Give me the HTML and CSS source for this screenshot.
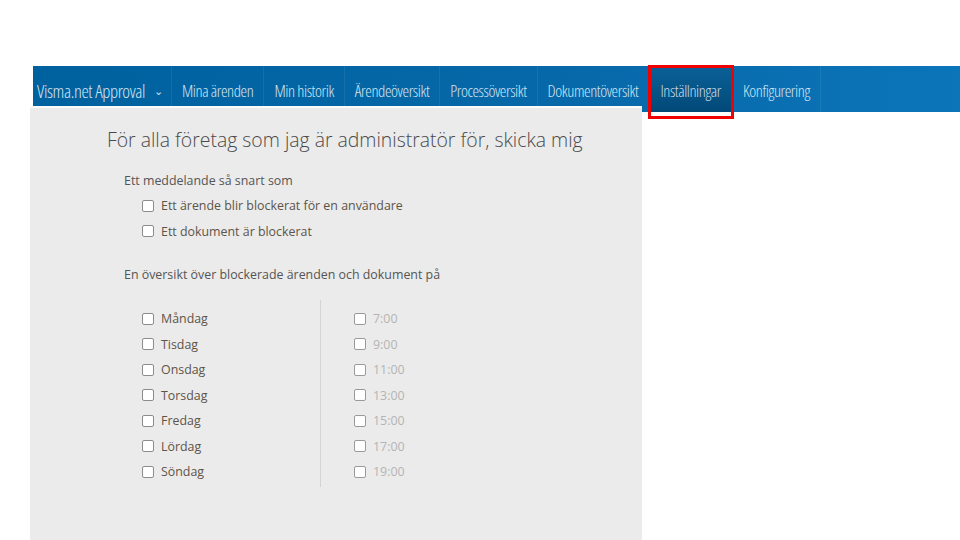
FILE: index.html
```html
<!DOCTYPE html>
<html lang="sv">
<head>
    <meta charset="UTF-8">
    <title>Inställningar</title>
    <link rel="stylesheet" href="styles.css">
</head>
<body>
    <div class="topbar">
        <ul class="nav">
            <li class="brand">Visma.net Approval <span class="caret">&#8964;</span></li>
            <li>Mina ärenden</li>
            <li>Min historik</li>
            <li>Ärendeöversikt</li>
            <li>Processöversikt</li>
            <li>Dokumentöversikt</li>
            <li class="active">Inställningar<span class="mark"></span></li>
            <li>Konfigurering</li>
        </ul>
    </div>

    <div class="panel">
        <h1>För alla företag som jag är administratör för, skicka mig</h1>

        <div class="section">
            <p class="caption">Ett meddelande så snart som</p>
            <label class="check"><span class="box"></span>Ett ärende blir blockerat för en användare</label>
            <label class="check"><span class="box"></span>Ett dokument är blockerat</label>
        </div>

        <div class="section">
            <p class="caption">En översikt över blockerade ärenden och dokument på</p>
            <div class="schedule">
                <div class="days">
                    <label class="check"><span class="box"></span>Måndag</label>
                    <label class="check"><span class="box"></span>Tisdag</label>
                    <label class="check"><span class="box"></span>Onsdag</label>
                    <label class="check"><span class="box"></span>Torsdag</label>
                    <label class="check"><span class="box"></span>Fredag</label>
                    <label class="check"><span class="box"></span>Lördag</label>
                    <label class="check"><span class="box"></span>Söndag</label>
                </div>
                <div class="times">
                    <label class="check"><span class="box"></span>7:00</label>
                    <label class="check"><span class="box"></span>9:00</label>
                    <label class="check"><span class="box"></span>11:00</label>
                    <label class="check"><span class="box"></span>13:00</label>
                    <label class="check"><span class="box"></span>15:00</label>
                    <label class="check"><span class="box"></span>17:00</label>
                    <label class="check"><span class="box"></span>19:00</label>
                </div>
            </div>
        </div>
    </div>
</body>
</html>
```

FILE: styles.css
```css
body {
    margin: 0;
    background-color: #fff;
    font-family: 'Open Sans', 'DejaVu Sans', sans-serif;
    color: #555;
    height: 540px;
    overflow: hidden;
}
.topbar {
    padding: 66px 0 0 33px;
}
.nav {
    list-style: none;
    margin: 0;
    padding: 0;
    display: flex;
    height: 46px;
    background: linear-gradient(to right, #00619f, #0869aa 60%, #0b75b9);
}
.nav li {
    position: relative;
    padding: 0 10px;
    line-height: 49px;
    color: #d2e4f1;
    font-size: 16.6px;
    font-weight: 300;
    font-stretch: 75%;
    letter-spacing: -0.42px;
    border-right: 1px solid rgba(255,255,255,0.07);
    white-space: nowrap;
}
.nav li.brand {
    padding: 0 11px 0 4px;
    width: 123px;
    font-size: 18.5px;
    letter-spacing: -0.4px;
}
.caret {
    font-size: 11px;
    margin-left: 6px;
    vertical-align: 3px;
}
.nav li.active {
    padding: 0 11px;
    background: linear-gradient(#0a6198, #024978);
    color: #c8dbe8;
}
.mark {
    position: absolute;
    left: -1px;
    right: -2px;
    top: -1px;
    height: 48px;
    border: 3px solid #f00000;
}
.panel {
    width: 612px;
    margin: -6px 0 0 30px;
    border-top: 2px solid #fafafa;
    background-color: #ebebeb;
    height: 440px;
    padding: 18px 0 0 77px;
    box-sizing: border-box;
}
h1 {
    margin: 0 0 19px;
    font-size: 19.4px;
    font-weight: 300;
    color: #4a4a4a;
}
.section {
    padding-left: 17px;
    margin-bottom: 22px;
}
.caption {
    margin: 0 0 4px;
    font-size: 12.4px;
    color: #555;
}
.check {
    display: flex;
    align-items: center;
    height: 25.5px;
    padding-left: 18px;
    font-size: 12.4px;
    color: #5e5448;
}
.box {
    width: 10px;
    height: 10px;
    border: 1px solid #8c8c8c;
    border-radius: 2px;
    background-color: #fff;
    margin-right: 7px;
}
.schedule {
    display: flex;
    margin-top: 17px;
}
.days {
    width: 196px;
    padding: 6px 0 2px;
    border-right: 1px solid #d4d4d4;
}
.times {
    padding: 6px 0 0 15px;
}
.times .check {
    color: #b4b4b4;
}
.times .box {
    border-color: #9a9a9a;
}
```
